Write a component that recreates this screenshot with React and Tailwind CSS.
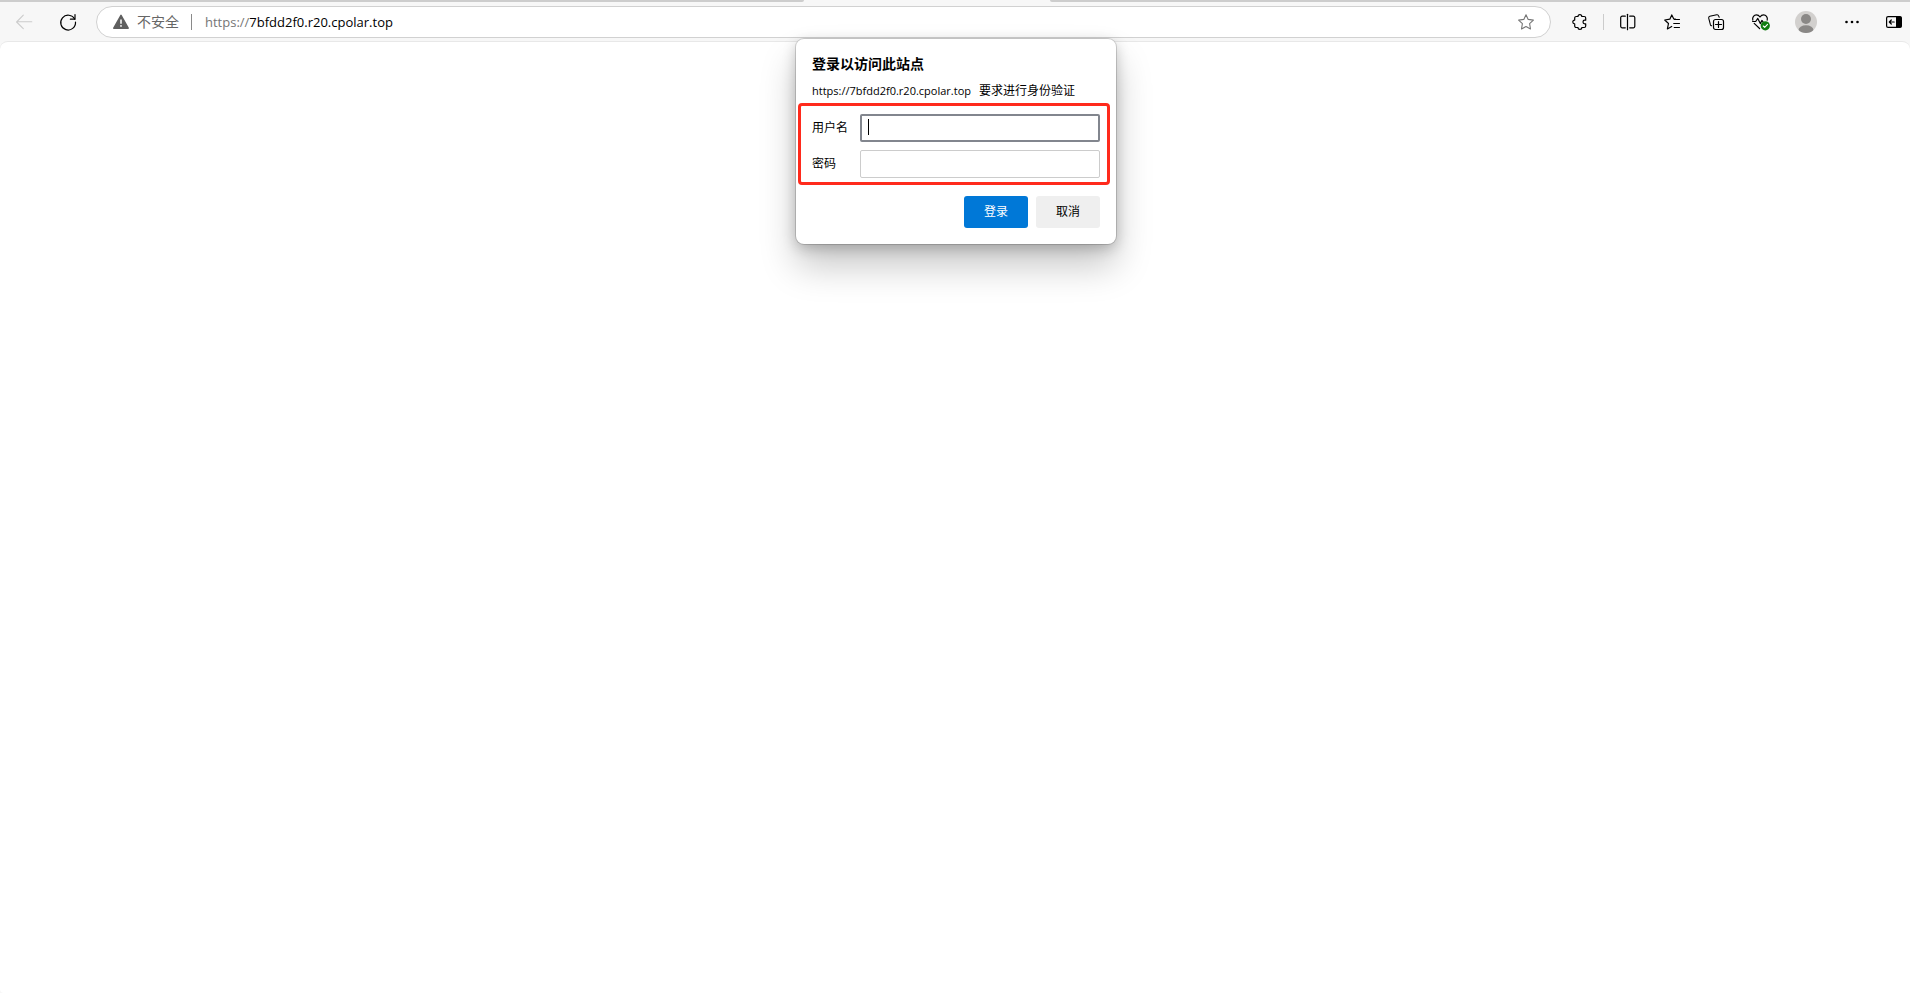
import { useState } from 'react';

const Icon = ({ children, className = '' }) => (
    <svg
        className={`w-4 h-4 shrink-0 overflow-visible ${className}`}
        viewBox="0 0 16 16"
        fill="none"
        stroke="currentColor"
        strokeWidth="1.1"
        strokeLinecap="round"
        strokeLinejoin="round"
        aria-hidden="true"
    >
        {children}
    </svg>
);

const BackIcon = () => (
    <Icon>
        <path d="M7.3 1.2 0.6 8l6.7 6.6M0.8 7.7h15" />
    </Icon>
);

const ReloadIcon = () => (
    <Icon>
        <path d="M14.7 5.2A7.4 7.4 0 1 0 15.5 8" strokeWidth="1.2" />
        <path d="M15 0.6v4.6h-4.6" strokeWidth="1.2" />
    </Icon>
);

const WarningIcon = () => (
    <Icon className="text-[#5f5f5f]">
        <path d="M8 1.4 15.2 14.2H0.8Z" fill="currentColor" strokeWidth="1.5" />
        <path d="M8 5.5v4.3" stroke="white" strokeWidth="1.5" strokeLinecap="butt" />
        <circle cx="8" cy="11.9" r="0.9" fill="white" stroke="none" />
    </Icon>
);

const StarIcon = () => (
    <Icon>
        <path d="m8 0.7 2.2 4.7 5.2.7-3.8 3.6.9 5.3L8 12.5 3.5 15l.9-5.3L.6 6.1l5.2-.7Z" />
    </Icon>
);

const PuzzleIcon = () => (
    <Icon>
        <path
            d="M4.2 2.5H6a1.9 1.9 0 0 1 3.8 0h2.4a1.5 1.5 0 0 1 1.5 1.5v2.2h-.9a1.8 1.8 0 0 0 0 3.6h.9V12a1.5 1.5 0 0 1-1.5 1.5H9.8a1.9 1.9 0 0 1-3.8 0H4.2A1.5 1.5 0 0 1 2.7 12V9.9a1.9 1.9 0 0 1 0-3.8V4a1.5 1.5 0 0 1 1.5-1.5Z"
            strokeWidth="1.2"
        />
    </Icon>
);

const SplitIcon = () => (
    <Icon>
        <path d="M5.3 2.2H2.2A1.5 1.5 0 0 0 .7 3.7v8.6a1.5 1.5 0 0 0 1.5 1.5h3.1M9.7 2.2h3.6a1.5 1.5 0 0 1 1.5 1.5v8.6a1.5 1.5 0 0 1-1.5 1.5H9.7" strokeWidth="1.2" />
        <path d="M7.5 0.3v15.4" strokeWidth="1.2" />
    </Icon>
);

const FavoritesIcon = () => (
    <Icon>
        <path d="M11.4 5.2 9.8 5 7.8 0.9 5.8 5.2 0.7 6l3.8 3.5-1.1 5.4 4.3-2.4" strokeWidth="1.2" />
        <path d="M10.5 5.5h5M9.7 9.5h5.8M10.2 13.5h5.3" strokeWidth="1.1" />
    </Icon>
);

const CollectionsIcon = () => (
    <Icon>
        <path d="M11.2 3.3 10.6 1.9A1.6 1.6 0 0 0 8.7.8L1.8 2.3A1.6 1.6 0 0 0 .7 4.2l1.7 6.5a1.7 1.7 0 0 0 1.2 1.1" strokeWidth="1.1" />
        <rect x="5.5" y="5.5" width="10" height="10" rx="2" strokeWidth="1.2" />
        <path d="M10.5 7.5v6M7.5 10.5h6" strokeWidth="1.2" />
    </Icon>
);

const HealthIcon = () => (
    <Icon>
        <path d="M0.8 6.1C0 3 2.2.9 4.4.9 6.2.9 7.2 1.8 8 3c.8-1.2 1.8-2.1 3.6-2.1 2.2 0 4.4 2.1 3.6 5.2" strokeWidth="1.2" />
        <path d="M0.6 7.5h3.1l2.1-3.1 2.5 5.2 1.6-3.1 1 1.2M2.2 9.4l5.4 5.1" strokeWidth="1.2" />
        <circle cx="13.3" cy="11.8" r="4.6" fill="#107c10" stroke="none" />
        <path d="m11.3 12 1.4 1.4 2.8-3" stroke="white" strokeWidth="1.1" />
    </Icon>
);

const AvatarIcon = () => (
    <svg className="w-[22px] h-[22px] shrink-0" viewBox="0 0 22 22" aria-hidden="true">
        <defs>
            <clipPath id="avatar">
                <circle cx="11" cy="11" r="11" />
            </clipPath>
        </defs>
        <g clipPath="url(#avatar)">
            <rect width="22" height="22" fill="#d2d0ce" />
            <circle cx="11" cy="8" r="5" fill="#8a8886" />
            <ellipse cx="11" cy="19.3" rx="7.5" ry="5" fill="#8a8886" />
        </g>
    </svg>
);

const MoreIcon = () => (
    <Icon>
        <g fill="currentColor" stroke="none">
            <circle cx="2.5" cy="8" r="1.3" />
            <circle cx="8" cy="8" r="1.3" />
            <circle cx="13.5" cy="8" r="1.3" />
        </g>
    </Icon>
);

const SidebarIcon = () => (
    <Icon>
        <rect x="0.6" y="2.6" width="14.8" height="10.8" rx="1.5" strokeWidth="1.2" />
        <path d="M10 2.5h4a1.6 1.6 0 0 1 1.6 1.6v7.8a1.6 1.6 0 0 1-1.6 1.6h-4Z" fill="currentColor" stroke="none" />
        <path d="M8.2 8H3.6M5.3 6 3.3 8l2 2" strokeWidth="1.2" />
    </Icon>
);

const ToolButton = ({ label, children, className = 'w-9' }) => (
    <button type="button" aria-label={label} className={`h-8 shrink-0 flex items-center justify-center rounded hover:bg-black/5 ${className}`}>
        {children}
    </button>
);

const tools = [
    { label: '拆分屏幕', icon: SplitIcon },
    { label: '收藏夹', icon: FavoritesIcon },
    { label: '集锦', icon: CollectionsIcon },
    { label: '浏览器概要', icon: HealthIcon },
];

const Toolbar = () => (
    <header className="bg-[#f7f7f7]">
        {/* bottom edge of the tab strip, open below the active tab */}
        <div className="flex h-0.5">
            <div className="w-[42.1%] bg-[#cdcdcd] rounded-br-sm" />
            <div className="w-[12.9%]" />
            <div className="flex-1 bg-[#cdcdcd] rounded-bl-sm" />
        </div>
        <div className="flex items-center pt-1 pb-[3px] pl-1.5">
            <div className="flex gap-2 mr-2.5 text-black">
                <ToolButton label="返回" className="w-9 text-[#cccccc]"><BackIcon /></ToolButton>
                <ToolButton label="刷新"><ReloadIcon /></ToolButton>
            </div>
            <div className="flex-1 min-w-0 flex items-center h-8 px-4 bg-white border border-[#d1d1d1] rounded-full text-sm">
                <button type="button" className="flex items-center gap-2 shrink-0 text-[#666666]">
                    <WarningIcon />
                    不安全
                </button>
                <span className="w-px h-4 ml-3 mr-[13px] bg-[#8a8a8a]" />
                <a href="https://7bfdd2f0.r20.cpolar.top" className="flex-1 truncate text-[13px] text-black">
                    <span className="text-[#767676]">https://</span>7bfdd2f0.r20.cpolar.top
                </a>
                <button type="button" aria-label="收藏" className="text-[#767676]"><StarIcon /></button>
            </div>
            <div className="flex items-center ml-[11px] text-black">
                <ToolButton label="扩展"><PuzzleIcon /></ToolButton>
                <span className="w-px h-4 ml-[5px] mr-1.5 bg-[#cccccc]" />
                <div className="flex gap-2 mr-2.5">
                    {tools.map(({ label, icon: ToolIcon }) => (
                        <ToolButton key={label} label={label}><ToolIcon /></ToolButton>
                    ))}
                </div>
                <ToolButton label="个人资料"><AvatarIcon /></ToolButton>
                <ToolButton label="设置及其他" className="w-9 ml-2.5 mr-2"><MoreIcon /></ToolButton>
                <ToolButton label="侧栏" className="w-8"><SidebarIcon /></ToolButton>
            </div>
        </div>
    </header>
);

const LoginDialog = () => {
    const [username, setUsername] = useState('');
    const [password, setPassword] = useState('');

    return (
        <form
            role="dialog"
            aria-labelledby="login-title"
            onSubmit={(e) => e.preventDefault()}
            className="absolute top-[39px] left-1/2 -ml-[159px] w-80 pt-[15px] pb-4 bg-white rounded-lg ring-1 ring-black/15 shadow-[0_22px_36px_rgba(0,0,0,0.22),0_4px_14px_rgba(0,0,0,0.22)] text-xs text-black"
        >
            <h1 id="login-title" className="px-4 text-sm leading-5 font-bold">登录以访问此站点</h1>
            <p className="flex items-center gap-2 mt-[9px] px-4 h-4 whitespace-nowrap">
                <span className="text-[11px]">https://7bfdd2f0.r20.cpolar.top</span>
                要求进行身份验证
            </p>
            <div className="mt-1 ml-0.5 mr-1.5 pt-2 pb-1 pl-[11px] pr-[7px] border-3 border-[#ff2a1c] rounded-sm flex flex-col gap-2">
                <div className="flex items-center">
                    <label htmlFor="username" className="w-12 shrink-0">用户名</label>
                    <div className="relative flex-1">
                        <input
                            id="username"
                            type="text"
                            value={username}
                            onChange={(e) => setUsername(e.target.value)}
                            className="block w-full h-7 px-2 border-2 border-[#82868e] rounded-xs outline-none caret-transparent"
                        />
                        {!username && <span className="absolute left-2 top-[5px] w-px h-4 bg-black pointer-events-none" />}
                    </div>
                </div>
                <div className="flex items-center">
                    <label htmlFor="password" className="w-12 shrink-0">密码</label>
                    <input
                        id="password"
                        type="password"
                        value={password}
                        onChange={(e) => setPassword(e.target.value)}
                        className="flex-1 min-w-0 h-7 px-2 border border-[#cccccc] rounded-xs outline-none"
                    />
                </div>
            </div>
            <div className="flex justify-end gap-2 mt-[11px] px-4">
                <button type="submit" className="w-16 h-8 bg-[#0078d7] text-white rounded-[3px]">登录</button>
                <button type="button" className="w-16 h-8 bg-[#efefef] text-black rounded-[3px]">取消</button>
            </div>
        </form>
    );
};

export default function App() {
    return (
        <div className="relative min-h-screen flex flex-col bg-[#f7f7f7] font-['Open_Sans','Noto_Sans_CJK_SC',sans-serif]">
            <Toolbar />
            <main className="flex-1 bg-white border-t border-[#e8e8e8] rounded-t-lg rounded-bl-sm" />
            <LoginDialog />
        </div>
    );
}
